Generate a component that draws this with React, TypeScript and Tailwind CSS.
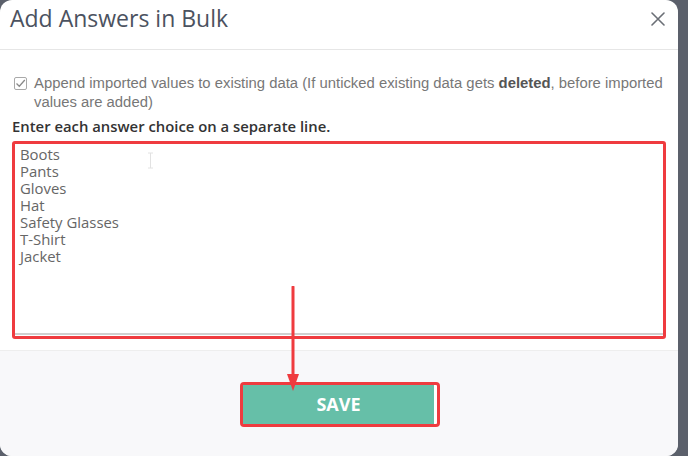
import React from "react";

export default function App() {
  const items = ["Boots", "Pants", "Gloves", "Hat", "Safety Glasses", "T-Shirt", "Jacket"];
  return (
    <div className="w-[688px] h-[456px] bg-[#5b606b] flex overflow-hidden">
      <div className="w-[678px] h-[456px] bg-white rounded-[12px] overflow-hidden flex flex-col relative">
        <div className="h-[50px] shrink-0 border-b border-[#e6e6e6] flex items-center justify-between pl-[10px] pr-[13px]">
          <div className="text-[23px] text-[#4b5260] leading-none pb-[12px]" style={{ fontFamily: '"Open Sans", sans-serif' }}>
            Add Answers in Bulk
          </div>
          <svg width="14" height="14" viewBox="0 0 14 14" className="mb-[12px]">
            <path d="M1 1 L13 13 M13 1 L1 13" stroke="#6b6f76" strokeWidth="1.6" strokeLinecap="round" />
          </svg>
        </div>
        <div className="px-[12px] pt-[24px] pb-[11px] bg-white">
          <div className="flex items-start gap-[7px] pl-[2px]">
            <div className="w-[13px] h-[13px] mt-[3px] shrink-0 border border-[#a9a9a9] rounded-[2px] flex items-center justify-center bg-white">
              <svg width="11" height="11" viewBox="0 0 11 11">
                <path d="M1.5 5.5 L4.3 8.3 L9.8 2" fill="none" stroke="#8a8a8a" strokeWidth="1.3" />
              </svg>
            </div>
            <div className="text-[14.85px] leading-[19px] text-[#777]" style={{ fontFamily: '"Liberation Sans", Arial, sans-serif' }}>
              Append imported values to existing data (If unticked existing data gets <b className="text-[#555]">deleted</b>, before imported values are added)
            </div>
          </div>
          <div className="mt-[5px] text-[14.85px] leading-[19px] font-semibold text-[#333]" style={{ fontFamily: '"Open Sans", sans-serif' }}>
            Enter each answer choice on a separate line.
          </div>
          <div className="mt-[5px] border-[3px] border-[#ef3b3f] rounded-[3px] h-[198px] flex flex-col">
            <div className="flex-1 border-b-[2px] border-[#cfcfcf] pl-[5px] pt-[2px] text-[14.9px] leading-[17px] text-[#666]" style={{ fontFamily: '"Open Sans", sans-serif' }}>
              {items.map((t) => (
                <div key={t}>{t}</div>
              ))}
            </div>
            <div className="h-[1px]" />
          </div>
        </div>
        <div className="flex-1 bg-[#f8f8fa] border-t border-[#eeeeee] flex justify-center pt-[31px]">
          <div className="ml-[2px] w-[200px] h-[45px] border-[3px] border-[#ef3b3f] rounded-[4px] flex bg-white">
            <div className="flex-1 bg-[#66bfa8] flex items-center justify-center text-white font-bold text-[18px] mr-[3px]" style={{ fontFamily: '"Open Sans", sans-serif' }}>
              SAVE
            </div>
          </div>
        </div>
        <svg className="absolute left-[147px] top-[152px]" width="7" height="17" viewBox="0 0 7 17">
          <path d="M1 1 L6 1 M3.5 1 L3.5 16 M1 16 L6 16" stroke="#e2e2e2" strokeWidth="1" fill="none" />
        </svg>
        <svg className="absolute left-[285px] top-[286px]" width="16" height="106" viewBox="0 0 16 106">
          <path d="M8 1 L8 92" stroke="#ef3b3f" strokeWidth="3" strokeLinecap="round" />
          <path d="M2 88 L14 88 L8 105 Z" fill="#ef3b3f" />
        </svg>
      </div>
    </div>
  );
}
